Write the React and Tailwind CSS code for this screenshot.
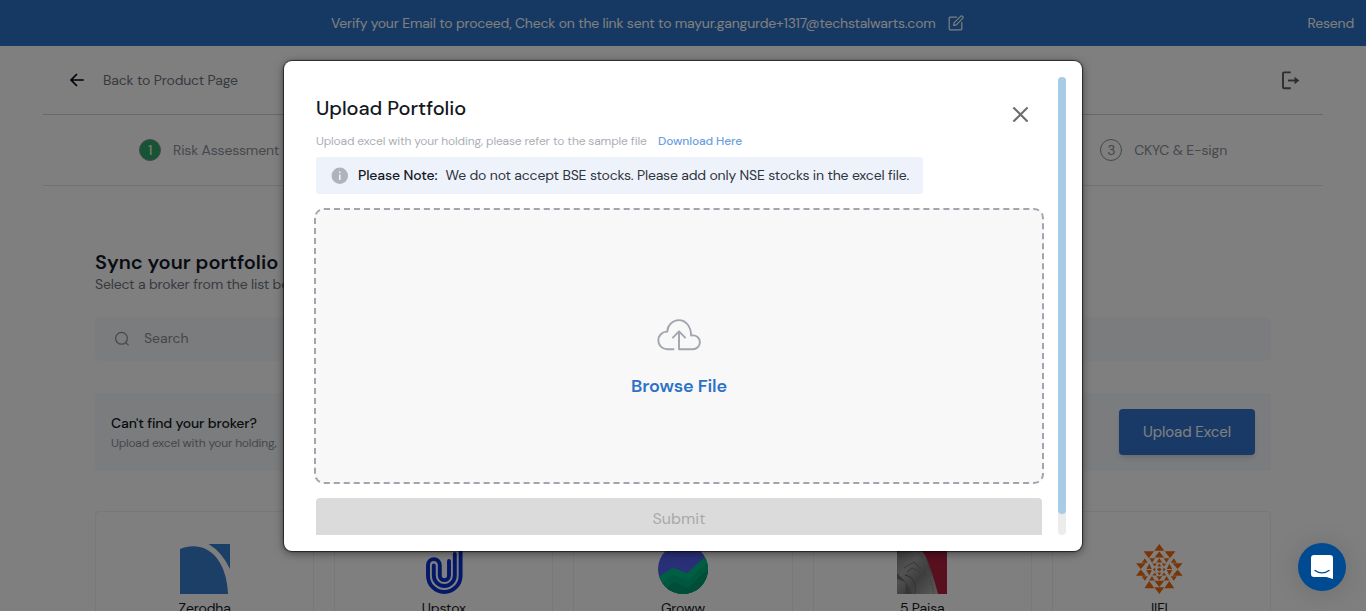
const font = "font-['DM_Sans','Inter',sans-serif]";

function EditIcon() {
  return (
    <svg className="h-4 w-4" viewBox="0 0 16 16" fill="none" stroke="#fff" strokeWidth="1.2" strokeLinecap="round" strokeLinejoin="round">
      <path d="M8.5 2.2H2.2Q1.2 2.2 1.2 3.2V13.8Q1.2 14.8 2.2 14.8H12.8Q13.8 14.8 13.8 13.8V7.6" />
      <path d="M5.6 10.4 6.2 7.7 12.6 1.3Q13.6.5 14.6 1.4T14.7 3.4L8.3 9.8Z" />
    </svg>
  );
}

function BackIcon() {
  return (
    <svg className="h-4 w-4" viewBox="0 0 16 16" fill="none" stroke="#000014" strokeWidth="1.7">
      <path d="M14.8 8H2M8 2 2 8 8 14" />
    </svg>
  );
}

function LogoutIcon() {
  return (
    <svg className="h-5 w-5" viewBox="0 0 20 20" fill="none" stroke="#5b5b5b" strokeWidth="1.9">
      <path d="M10.8 2.4H4Q3 2.4 3 3.4V17.3Q3 18.3 4 18.3H10.8" />
      <path d="M8 10.5H16.5" />
      <path d="M14.5 6.8 19.3 10.5 14.5 14.2Z" fill="#5b5b5b" stroke="none" />
    </svg>
  );
}

function SearchIcon() {
  return (
    <svg className="h-4 w-4" viewBox="0 0 16 16" fill="none" stroke="#8a8f98" strokeWidth="1.2">
      <circle cx="7.5" cy="7.3" r="5.9" />
      <path d="M11.8 11.6 14.6 14.4" />
    </svg>
  );
}

function InfoIcon() {
  return (
    <svg className="h-[17px] w-[17px] shrink-0" viewBox="0 0 17 17">
      <circle cx="8.8" cy="8.8" r="8.2" fill="#aeb4bb" />
      <path d="M8 4.5h1.6v1.6H8zM8 7.5h1.6v5.6H8z" fill="#eef3fb" />
    </svg>
  );
}

function CloudIcon() {
  return (
    <svg className="h-8 w-11" viewBox="0 0 44 32" fill="none" stroke="#a1a5ad" strokeWidth="1.9" strokeLinejoin="round" strokeLinecap="round">
      <path d="M16.5 30.2H10.3C5 30.2 1.3 26.3 1.3 21.5S5 12.6 10.2 12.6C10.6 6 15.7 1.1 22 1.1S34.1 7 34.1 16.6C39.5 15.6 42.9 19 42.9 23.2S39.6 30.2 35.6 30.2H22V12.6" />
      <path d="M15.9 18.6 22 12.4 28.1 18.6" />
    </svg>
  );
}

function Zerodha() {
  return (
    <svg className="h-[50px] w-[50px]" viewBox="0 0 50 50" fill="#387ed1">
      <path d="M0 5C22-4 46 9 48 50H0Z" />
      <path d="M28.5 0H50V25Q42 8 28.5 0Z" />
    </svg>
  );
}

function Upstox() {
  return (
    <svg className="h-[50px] w-[50px]" viewBox="0 0 50 50" fill="none" stroke="#0630d2" strokeWidth="3.9" strokeLinecap="round">
      <path d="M41.6 0V31.7A16.3 16.3 0 0 1 9 31.7V21A5.9 5.9 0 0 1 20.8 21V31.5A4.6 4.6 0 0 0 30 31.5V17" />
      <path d="M35.8 10V31.5A10.5 10.5 0 0 1 14.8 31.5V21.5" />
    </svg>
  );
}

function Groww() {
  return (
    <svg className="h-[50px] w-[50px]" viewBox="0 0 50 50">
      <defs>
        <clipPath id="growwDisc"><circle cx="25" cy="25" r="25" /></clipPath>
      </defs>
      <g clipPath="url(#growwDisc)">
        <path d="M0 0H50V50H0Z" fill="#5360f0" />
        <path d="M0 33 15 23.5 29 29 50 10V50H0Z" fill="#00bd86" />
        <path d="M0 42 15 31 30 37 50 18V50H0Z" fill="#00ad7c" />
        <path d="M8 45 16 38 30 44 50 25V50H8Z" fill="#009b70" />
      </g>
    </svg>
  );
}

function FivePaisa() {
  return (
    <svg className="h-[50px] w-[50px]" viewBox="0 0 50 50">
      <defs>
        <linearGradient id="coin" x1="0" y1="0" x2="1" y2="1">
          <stop offset="0" stopColor="#777" />
          <stop offset=".35" stopColor="#a5a5a5" />
          <stop offset=".6" stopColor="#7c7c7c" />
          <stop offset="1" stopColor="#b8b8b8" />
        </linearGradient>
      </defs>
      <path d="M0 0H50V50H0Z" fill="#b0203f" />
      <path d="M0 9C8 0 23 1 29 13Q36 30 41 50H0Z" fill="url(#coin)" />
      <path d="M3 9C11 3 21 5 26 15Q33 31 37 50" fill="none" stroke="#8d8d8d" strokeWidth="1.3" strokeDasharray="2 1" />
      <path d="M7 24 17 18 24 25M10 28 15 24 23 28" fill="none" stroke="#7b7b7b" strokeWidth="1.3" />
      <path d="M8 31A12 13 0 0 1 17 50" fill="none" stroke="#6e6e6e" strokeWidth="1.3" />
      <path d="M0 29 9 38 0 35ZM9 38 15 50H8Z" fill="#6c6c6c" />
    </svg>
  );
}

function Iifl() {
  return (
    <svg className="h-[50px] w-[50px]" viewBox="1.2 0 50 50" fill="#f26a0a">
      <path d="M24.5 0 29.5 6.7H19.5ZM24.5 50 29.5 43.3H19.5Z" />
      <path d="M8.7 7.2H19.2L14 14.2ZM29.8 7.2H40.6L35.2 14.2Z" />
      <path d="M1.1 19.2H11L6 25ZM37.8 19.2H47.8L42.8 25Z" />
      <path d="M1.1 31.8H11L6 25.6ZM37.8 31.8H47.8L42.8 25.6Z" />
      <path d="M14.5 37 19.5 44.2H9.6ZM34.5 37 39.5 44.2H29.5Z" />
      <path d="M19.7 13.5 24.5 7.5 29.3 13.5ZM19.5 36.8H29.5L24.5 43Z" />
      <path d="M7 18.7 10 14.2 13 18.7ZM36 18.7 39 14.2 42 18.7Z" />
      <path d="M7 32.3H13L10 36.7ZM36 32.3H42L39 36.7Z" />
      <path d="M14.5 14.2H20.2L17.3 18.7ZM28.8 14.2H34.5L31.7 18.7Z" />
      <path d="M14.3 36.6 17.2 32 20 36.6ZM29 36.6 31.8 32 34.7 36.6Z" />
      <path d="M21.5 18.5 24.5 14.3 27.5 18.5ZM21.5 32.3H27.5L24.5 36.2Z" />
      <path d="M11.5 25 14.5 19.5 17 25ZM32 25 34.5 19.5 37.5 25Z" />
      <path d="M11.5 26H17L14.5 31.5ZM32 26H37.5L34.5 31.5Z" />
      <path d="M17.5 19.5H22L20 22.5ZM27 19.5H31.5L29 22.5ZM17.5 31.5 20 28.5 22 31.5ZM27 31.5 29 28.5 31.5 31.5Z" />
      <path d="M22.5 22.5 24.5 19.5 26.5 22.5ZM22.5 28.5H26.5L24.5 31.5ZM18 25.5 20.5 23.5V27.5ZM31 25.5 28.5 23.5V27.5ZM22 25.5 24.5 23.5 27 25.5 24.5 27.5Z" />
    </svg>
  );
}

const brokers = [
  { name: "Zerodha", Logo: Zerodha },
  { name: "Upstox", Logo: Upstox },
  { name: "Groww", Logo: Groww },
  { name: "5 Paisa", Logo: FivePaisa },
  { name: "IIFL", Logo: Iifl },
];

function Page() {
  return (
    <div className="h-full overflow-hidden bg-white">
      <div className="flex h-[46px] items-center bg-[#2c72c7] pr-3 text-sm tracking-[-0.2px] text-white">
        <div className="flex flex-1 items-center pl-[331px]">
          <span className="w-[605px] whitespace-nowrap">Verify your Email to proceed, Check on the link sent to mayur.gangurde+1317@techstalwarts.com</span>
          <span className="ml-3"><EditIcon /></span>
        </div>
        <span>Resend</span>
      </div>
      <div className="mx-auto w-[1280px]">
        <div className="flex h-[69px] items-center justify-between border-b border-[#d1d1d5] pr-[23px] pl-[26px]">
          <div className="flex items-center gap-[18px]">
            <BackIcon />
            <span className="text-sm tracking-[-0.17px] text-[#6f747f]">Back to Product Page</span>
          </div>
          <LogoutIcon />
        </div>
        <div className="flex h-[71px] items-center justify-between border-b border-[#e4e4e6] pr-24 pl-24 text-sm tracking-[-0.18px] text-[#8a8f98]">
          <div className="flex items-center gap-3">
            <span className="flex h-[22px] w-[22px] items-center justify-center rounded-full border border-[#8a8f98] bg-[#2fa866] text-white">1</span>
            <span>Risk Assessment</span>
          </div>
          <div className="flex items-center gap-3">
            <span className="flex h-[22px] w-[22px] items-center justify-center rounded-full border border-[#8a8f98]">3</span>
            <span>CKYC &amp; E-sign</span>
          </div>
        </div>
      </div>
      <div className="mx-auto w-[1176px] pt-[62px]">
        <h1 className="text-xl leading-7 font-semibold text-[#14192a]">Sync your portfolio</h1>
        <p className="text-sm leading-4 tracking-[-0.17px] text-[#6f747f]">Select a broker from the list below</p>
        <div className="mt-[25px] flex h-11 items-center gap-[14px] rounded-md bg-[#f6f8fb] pl-[19px] text-sm text-[#8a8f98]">
          <SearchIcon />
          <span className="pb-0.5">Search</span>
        </div>
        <div className="mt-8 flex h-[78px] items-center justify-between rounded-xs bg-[#f6f8fb] px-4">
          <div className="pt-0.5">
            <p className="text-sm leading-5 font-medium tracking-[-0.15px] text-[#14181f]">Can't find your broker?</p>
            <p className="w-44 text-xs leading-5 tracking-[-0.2px] text-[#8a8f98]">Upload excel with your holding,</p>
          </div>
          <button className="h-[46px] w-[136px] rounded bg-[#3275cf] text-[15px] tracking-[-0.1px] text-white shadow-md">Upload Excel</button>
        </div>
        <div className="mt-10 grid grid-cols-5 gap-5">
          {brokers.map(({ name, Logo }) => (
            <div key={name} className="flex h-32 flex-col items-center rounded border border-[#f0f0f0] pt-8">
              <Logo />
              <span className="mt-1 text-sm leading-5 tracking-[-0.15px] text-[#14181f]">{name}</span>
            </div>
          ))}
        </div>
      </div>
    </div>
  );
}

function Modal() {
  return (
    <div className="flex h-[490px] w-[798px] overflow-hidden rounded-lg bg-white p-4 shadow-[0_0_1px_1px_rgba(0,0,0,0.6),0_2px_10px_rgba(0,0,0,0.5)]">
      <div className="flex-1 overflow-hidden px-4 pt-[17px]">
        <div className="flex h-[63px] w-[726px] justify-between">
          <div>
            <h2 className="text-xl leading-7 font-medium tracking-[-0.05px] text-[#14181f]">Upload Portfolio</h2>
            <p className="mt-[9px] flex gap-[11px] text-xs leading-5 whitespace-nowrap">
              <span className="w-[331px] tracking-[-0.15px] text-[#abaeb5]">Upload excel with your holding, please refer to the sample file</span>
              <span className="font-medium tracking-[-0.12px] text-[#6b9fe0]">Download Here</span>
            </p>
          </div>
          <svg className="mt-3 mr-[14px] h-4 w-4" viewBox="0 0 16 16" fill="none" stroke="#6d6d6d" strokeWidth="2.1">
            <path d="M1.4 1.4 15.6 15.6M15.6 1.4 1.4 15.6" />
          </svg>
        </div>
        <div className="flex h-[37px] w-[607px] items-center rounded-[3px] bg-[#eef3fb] pl-[15px] text-sm whitespace-nowrap text-[#30343b]">
          <InfoIcon />
          <span className="ml-2.5 w-20 font-medium tracking-[-0.12px] text-[#14181f]">Please Note:</span>
          <span className="ml-[7.5px] tracking-[-0.175px]">We do not accept BSE stocks. Please add only NSE stocks in the excel file.</span>
        </div>
        <div className="mt-[14px] -ml-0.5 flex h-[276px] w-[730px] flex-col items-center rounded-[10px] border-2 border-dashed border-[#a1a5ad] bg-[#f8f8f8] pt-[109px]">
          <CloudIcon />
          <span className="mt-[23px] text-lg leading-6 font-semibold tracking-[-0.15px] text-[#2c72c7]">Browse File</span>
        </div>
        <button className="mt-[14px] h-[42px] w-[726px] rounded bg-[#dbdbdb] text-base text-[#a9a9a9]">Submit</button>
      </div>
      <div className="w-2 rounded-full bg-[#ececec]">
        <div className="h-[437px] w-2 rounded-full bg-[#a9cce6]" />
      </div>
    </div>
  );
}

export default function App() {
  return (
    <div className={`relative h-[611px] w-full overflow-hidden ${font}`}>
      <Page />
      <div className="absolute inset-0 flex items-center justify-center bg-black/50">
        <Modal />
      </div>
      <div className="absolute right-5 bottom-5 flex h-12 w-12 items-center justify-center rounded-full bg-[#004a91] shadow-[0_2px_28px_rgba(0,0,0,0.14)]">
        <svg className="h-6 w-[22px]" viewBox="0 0 22 24">
          <path d="M3 0H19Q22 0 22 3V24L15.5 22H3Q0 22 0 19V3Q0 0 3 0Z" fill="#fff" />
          <path d="M4 15.5Q11 20.3 18 15.5" fill="none" stroke="#004a91" strokeWidth="1.4" strokeLinecap="round" />
        </svg>
      </div>
    </div>
  );
}
